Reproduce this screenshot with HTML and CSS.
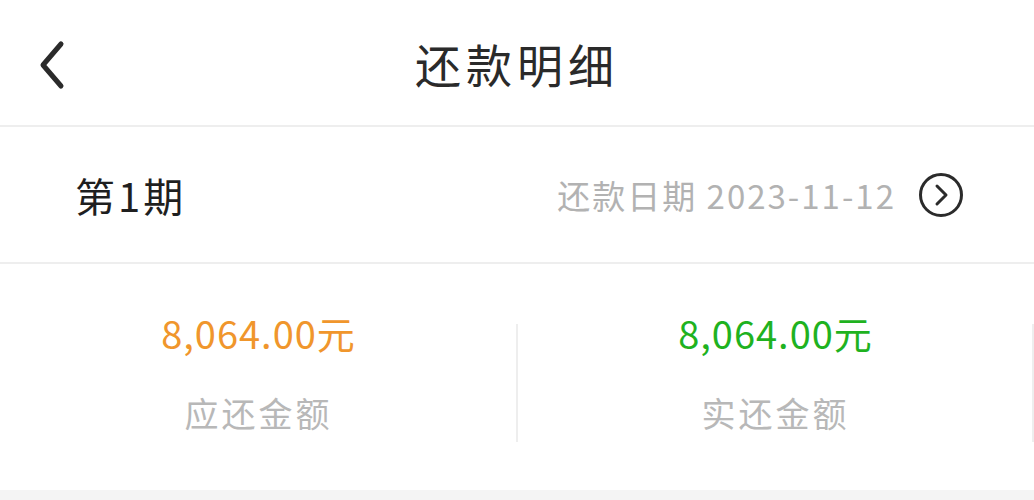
FILE: index.html
```html
<!DOCTYPE html>
<html lang="zh-CN">
  <head>
    <meta charset="UTF-8" />
    <meta name="viewport" content="width=device-width, initial-scale=1.0" />
    <title>还款明细</title>
    <link rel="stylesheet" href="styles.css">
  </head>
  <body>
    <header class="top-bar">
      <span class="back">
        <svg width="30" height="50" viewBox="0 0 30 50">
          <path d="M24 4 L6 25 L24 46" fill="none" stroke="#2b2b2b" stroke-width="5" stroke-linecap="round" stroke-linejoin="round" />
        </svg>
      </span>
      <h1 class="title">还款明细</h1>
    </header>

    <section class="period">
      <div class="period-name">第1期</div>
      <div class="period-date">
        <span>还款日期 2023-11-12</span>
        <svg width="46" height="46" viewBox="0 0 46 46">
          <circle cx="23" cy="23" r="20.5" fill="none" stroke="#2b2b2b" stroke-width="3" />
          <path d="M19 14 L28 23 L19 32" fill="none" stroke="#2b2b2b" stroke-width="3" stroke-linecap="round" stroke-linejoin="round" />
        </svg>
      </div>
    </section>

    <section class="amounts">
      <div class="amount">
        <div class="value due">8,064.00元</div>
        <div class="label">应还金额</div>
      </div>
      <div class="amount">
        <div class="value paid">8,064.00元</div>
        <div class="label">实还金额</div>
      </div>
    </section>

    <div class="footer-band"></div>
  </body>
</html>
```

FILE: styles.css
```css
body {
  margin: 0;
  background: #fff;
  font-family: "Noto Sans CJK SC", "Noto Sans", sans-serif;
  color: #222;
}

.top-bar {
  height: 125px;
  display: flex;
  align-items: center;
  justify-content: center;
  position: relative;
  border-bottom: 2px solid #eeeeee;
}

.back {
  position: absolute;
  left: 37px;
  top: 40px;
  display: flex;
}

.title {
  margin: 0;
  font-size: 46px;
  font-weight: 400;
  letter-spacing: 5px;
  color: #2a2a2a;
}

.period {
  height: 135px;
  display: flex;
  align-items: center;
  justify-content: space-between;
  padding: 0 70px 0 75px;
  border-bottom: 2px solid #eeeeee;
}

.period-name {
  font-size: 40px;
  letter-spacing: 3px;
  color: #1f1f1f;
}

.period-date {
  display: flex;
  align-items: center;
  gap: 22px;
  font-size: 33px;
  color: #b2b2b2;
  letter-spacing: 2px;
}

.amounts {
  height: 226px;
  display: grid;
  grid-template-columns: 1fr 1fr;
  align-items: center;
}

.amount {
  position: relative;
  display: flex;
  flex-direction: column;
  align-items: center;
  gap: 28px;
  padding-bottom: 12px;
}

/* thin dividers between the columns */
.amount::after {
  content: "";
  position: absolute;
  right: 0;
  top: 19px;
  bottom: 7px;
  border-right: 2px solid #eeeeee;
}

.amount:first-child::after {
  right: -1px;
}

.value {
  font-size: 38px;
  letter-spacing: 1px;
}

.due {
  color: #f0962c;
}

.paid {
  color: #1fb21f;
}

.label {
  font-size: 34px;
  color: #b8b8b8;
  letter-spacing: 3px;
}

.footer-band {
  height: 10px;
  background: #f4f4f4;
}
```
